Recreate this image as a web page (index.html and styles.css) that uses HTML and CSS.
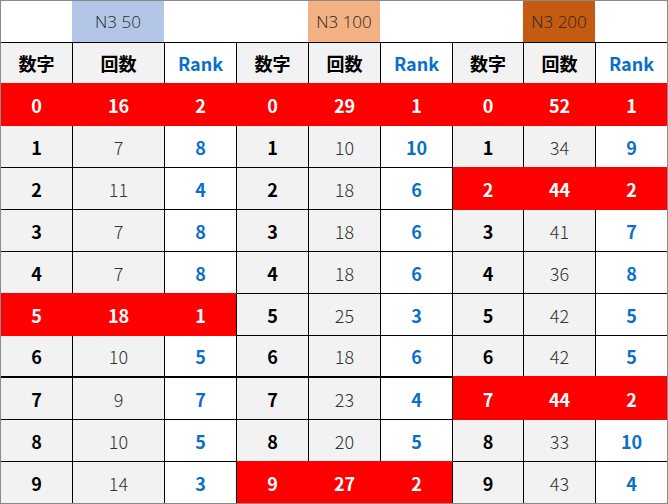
FILE: index.html
```html
<!DOCTYPE html>
<html lang="ja">
<head>
<meta charset="utf-8">
<link rel="stylesheet" href="styles.css">
</head>
<body>
<div class="sheet">
  <div class="top"></div><div class="top lbl blue">N3 50</div><div class="top"></div>
  <div class="top"></div><div class="top lbl salmon">N3 100</div><div class="top"></div>
  <div class="top"></div><div class="top lbl brown">N3 200</div><div class="top"></div>

  <div class="c hd g num">数字</div><div class="c hd g num">回数</div><div class="c hd w rk">Rank</div>
  <div class="c hd g num">数字</div><div class="c hd g num">回数</div><div class="c hd w rk">Rank</div>
  <div class="c hd g num">数字</div><div class="c hd g num">回数</div><div class="c hd w rk lc">Rank</div>

  <div class="c r">0</div><div class="c r">16</div><div class="c r">2</div>
  <div class="c r">0</div><div class="c r">29</div><div class="c r">1</div>
  <div class="c r">0</div><div class="c r">52</div><div class="c r lc">1</div>

  <div class="c g num">1</div><div class="c g cnt">7</div><div class="c w rk">8</div>
  <div class="c g num">1</div><div class="c g cnt">10</div><div class="c w rk">10</div>
  <div class="c g num">1</div><div class="c g cnt">34</div><div class="c w rk lc">9</div>

  <div class="c g num">2</div><div class="c g cnt">11</div><div class="c w rk">4</div>
  <div class="c g num">2</div><div class="c g cnt">18</div><div class="c w rk">6</div>
  <div class="c r">2</div><div class="c r">44</div><div class="c r lc">2</div>

  <div class="c g num">3</div><div class="c g cnt">7</div><div class="c w rk">8</div>
  <div class="c g num">3</div><div class="c g cnt">18</div><div class="c w rk">6</div>
  <div class="c g num">3</div><div class="c g cnt">41</div><div class="c w rk lc">7</div>

  <div class="c g num">4</div><div class="c g cnt">7</div><div class="c w rk">8</div>
  <div class="c g num">4</div><div class="c g cnt">18</div><div class="c w rk">6</div>
  <div class="c g num">4</div><div class="c g cnt">36</div><div class="c w rk lc">8</div>

  <div class="c r">5</div><div class="c r">18</div><div class="c r end">1</div>
  <div class="c g num">5</div><div class="c g cnt">25</div><div class="c w rk">3</div>
  <div class="c g num">5</div><div class="c g cnt">42</div><div class="c w rk lc">5</div>

  <div class="c g num tk">6</div><div class="c g cnt tk">10</div><div class="c w rk tk">5</div>
  <div class="c g num tk">6</div><div class="c g cnt tk">18</div><div class="c w rk tk">6</div>
  <div class="c g num tk">6</div><div class="c g cnt tk">42</div><div class="c w rk lc tk">5</div>

  <div class="c g num">7</div><div class="c g cnt">9</div><div class="c w rk">7</div>
  <div class="c g num">7</div><div class="c g cnt">23</div><div class="c w rk">4</div>
  <div class="c r below-tk">7</div><div class="c r below-tk">44</div><div class="c r lc below-tk">2</div>

  <div class="c g num">8</div><div class="c g cnt">10</div><div class="c w rk">5</div>
  <div class="c g num">8</div><div class="c g cnt">20</div><div class="c w rk">5</div>
  <div class="c g num">8</div><div class="c g cnt">33</div><div class="c w rk lc">10</div>

  <div class="c g num lr">9</div><div class="c g cnt lr">14</div><div class="c w rk lr">3</div>
  <div class="c r lr">9</div><div class="c r lr">27</div><div class="c r end lr">2</div>
  <div class="c g num lr">9</div><div class="c g cnt lr">43</div><div class="c w rk lc lr">4</div>
</div>
</body>
</html>
```

FILE: styles.css
```css
* { box-sizing: border-box; }
html, body { margin: 0; padding: 0; background: #fff; }
body { font-family: "Noto Sans CJK JP", "Noto Sans", sans-serif; }

.sheet {
  width: 668px;
  height: 504px;
  border: 1px solid #8a8a8a;
  display: grid;
  grid-template-columns: 72px 92px 72px 72px 72px 72px 71px 72px 71px;
  grid-template-rows: 41px 42px repeat(9, 42px) 41px;
  overflow: hidden;
}

.top {
  background: #fff;
  display: flex;
  align-items: center;
  justify-content: center;
}
.lbl {
  font-family: "Open Sans", "Noto Sans", sans-serif;
  font-size: 17px;
  font-weight: 300;
  color: #262626;
  margin-left: -1px;
  margin-right: 1px;
}
.blue { background: #b4c6e7; }
.salmon { background: #f4b183; }
.brown { background: #c55a11; }

.c {
  display: flex;
  align-items: center;
  justify-content: center;
  border-right: 1px solid #000;
  border-bottom: 1px solid #000;
  font-size: 18px;
  line-height: 1;
}
.hd { border-top: 1px solid #000; }
.lc { border-right: none; }
.lr { border-bottom: none; }
.tk { border-bottom-width: 2px; }

.g { background: #f2f2f2; }
.w { background: #fff; }

.num { font-weight: 700; color: #000; }
.cnt { font-weight: 300; color: #333; }
.rk { font-weight: 700; color: #0a6fcb; }

.r {
  background: #ff0000;
  color: #fff;
  font-weight: 700;
  border-color: #ff0000;
  box-shadow: 0 -1px 0 #ff0000;
}
.r.end { border-right-color: #000; }
.r.below-tk { box-shadow: 0 -2px 0 #ff0000; }
```
